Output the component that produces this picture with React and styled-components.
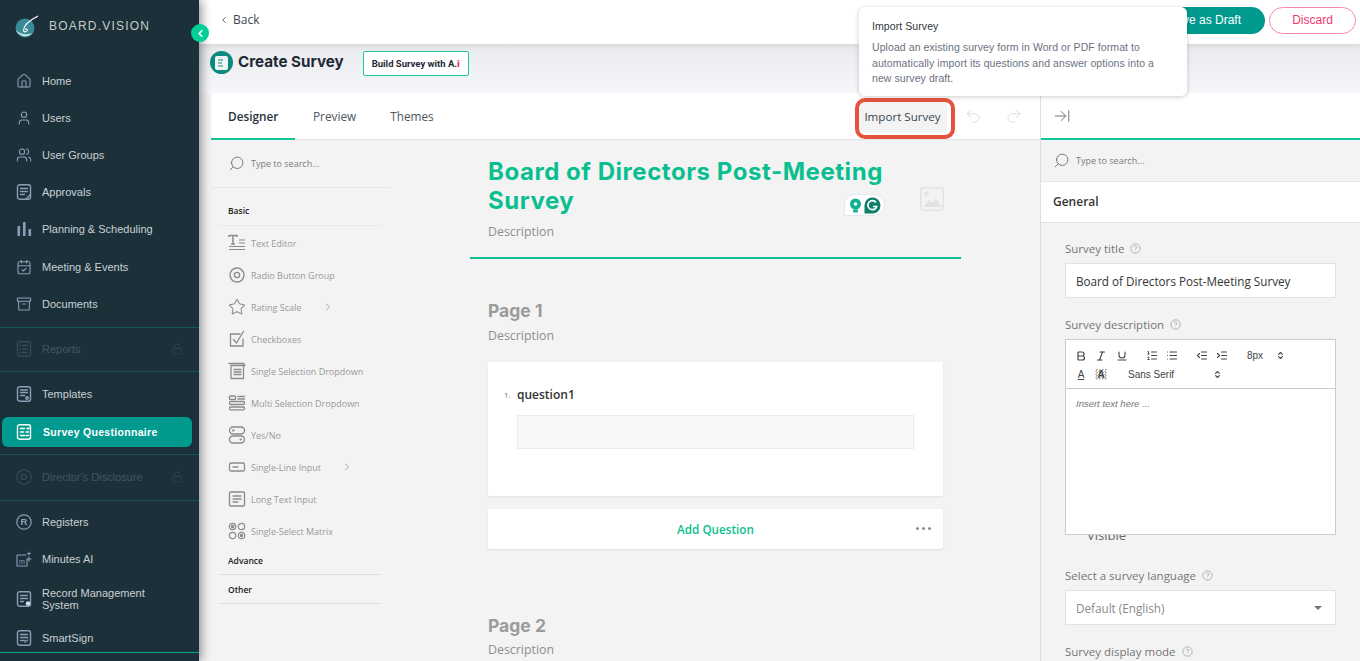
import React from 'react';
import styled, { createGlobalStyle } from 'styled-components';
import {
  House, User, Users, Archive, CalendarCheck, Lock, ChevronLeft, ChevronRight, Search, Star,
  Undo2, Redo2, ArrowRightToLine, Bold, Italic, Underline, ListOrdered, List,
  IndentDecrease, IndentIncrease, ChevronsUpDown,
} from 'lucide-react';

const GlobalStyle = createGlobalStyle`
  html, body { margin: 0; padding: 0; height: 100%; overflow: hidden; }
  * { box-sizing: border-box; }
  body { font-family: "Open Sans", sans-serif; background: #f3f3f3; }
`;

const Page = styled.div`
  position: relative;
  display: flex;
  width: 1360px;
  height: 661px;
  overflow: hidden;
`;

/* sidebar */
const Sidebar = styled.aside`
  flex: 0 0 199px;
  height: 661px;
  background: #1c3039;
  box-shadow: 2px 0 10px rgba(0, 0, 0, 0.45);
  z-index: 3;
  display: flex;
  flex-direction: column;
  font-family: "Liberation Sans", Arial, sans-serif;
`;

const Brand = styled.div`
  height: 62px;
  flex: none;
  padding: 14px 0 0 14px;
  display: flex;
  align-items: flex-start;
  gap: 11px;
  color: #c6ccc9;
  font-size: 12px;
  letter-spacing: 1.2px;
  span { margin-top: 5px; }
`;

const NavRow = styled.div`
  height: ${p => p.$h || 37.2}px;
  flex: none;
  display: flex;
  align-items: center;
  padding: 0 0 ${p => p.$pb || 0}px 16px;
  gap: 10px;
  font-size: 11px;
  line-height: 12px;
  color: #c9d0d6;
  position: relative;
  opacity: ${p => (p.$off ? 0.22 : 1)};
  svg.nav-icon { flex: none; width: 16px; height: 16px; color: #8d9db6; }
`;

const ActiveRow = styled.div`
  height: 30px;
  flex: none;
  margin: 0 7px 0 2px;
  padding-left: 14px;
  display: flex;
  align-items: center;
  gap: 11px;
  background: #009a8f;
  border-radius: 6px;
  color: #fff;
  font-size: 10.5px;
  font-weight: 700;
  letter-spacing: 0.3px;
  svg { flex: none; width: 16px; height: 16px; color: #fff; }
`;

const NavLock = styled(Lock)`
  position: absolute;
  right: 16px;
  width: 12px;
  height: 12px;
  color: #8293ad;
`;

const NavRule = styled.div`
  height: 1px;
  flex: none;
  background: ${p => p.$bright ? '#00a884' : '#17594f'};
`;

const Spacer = styled.div`
  height: ${p => p.$h}px;
  flex: none;
`;

const Collapse = styled.button`
  position: absolute;
  left: 191px;
  top: 24px;
  width: 18px;
  height: 18px;
  padding: 0;
  border: none;
  border-radius: 50%;
  background: #04cf96;
  color: #fff;
  display: flex;
  align-items: center;
  justify-content: center;
  z-index: 5;
`;

/* main */
const Main = styled.div`
  flex: 1;
  min-width: 0;
  display: flex;
  flex-direction: column;
`;

const TopBar = styled.header`
  height: 44px;
  flex: none;
  background: #fff;
  box-shadow: 0 1px 6px rgba(0, 0, 0, 0.1);
  display: flex;
  align-items: center;
  padding: 0 4px 3px 20px;
  z-index: 1;
`;

const BackLink = styled.a`
  display: flex;
  align-items: center;
  gap: 4px;
  margin-bottom: 2px;
  font-size: 12px;
  color: #3c4650;
`;

const Pill = styled.button`
  height: 27px;
  border-radius: 14px;
  font-family: "Liberation Sans", Arial, sans-serif;
  font-size: 12px;
  padding: 0 0 1px;
`;

const SaveButton = styled(Pill)`
  margin-left: auto;
  width: 110px;
  padding: 0 24px 1px 0;
  text-align: right;
  background: #009a8f;
  color: #fff;
  border: none;
`;

const DiscardButton = styled(Pill)`
  margin-left: 4px;
  width: 87px;
  background: #fff;
  color: #f2386f;
  border: 1px solid #f78aa9;
`;

const TitleBar = styled.div`
  height: 49px;
  flex: none;
  background: linear-gradient(#e8eaee, #f6f7fb);
  display: flex;
  align-items: flex-start;
  padding: 7px 0 0 11px;
`;

const TitleBadge = styled.span`
  width: 23px;
  height: 23px;
  flex: none;
  border-radius: 50%;
  background: #0d8a80;
  display: flex;
  align-items: center;
  justify-content: center;
  margin-right: 5px;
`;

const PageTitle = styled.h1`
  margin: 0;
  font-family: "Inter", sans-serif;
  font-size: 15.2px;
  line-height: 21px;
  font-weight: 700;
  color: #1f2a35;
`;

const BuildButton = styled.button`
  margin-left: 19px;
  height: 25px;
  width: 106px;
  padding: 0;
  background: #fff;
  border: 1px solid #19c79b;
  border-radius: 2px;
  font-family: "Roboto", sans-serif;
  font-size: 9.5px;
  font-weight: 700;
  color: #1f2a35;
  b { color: #e8326b; }
`;

const Workspace = styled.div`
  flex: 1;
  min-height: 0;
  display: flex;
`;

const Designer = styled.div`
  flex: 0 0 842px;
  display: flex;
  flex-direction: column;
  border-right: 1px solid #dedede;
`;

const TabBar = styled.nav`
  height: 47px;
  flex: none;
  margin-left: 12px;
  background: #fff;
  border-bottom: 1px solid #e4e4e4;
  display: flex;
  align-items: stretch;
`;

const Tab = styled.a`
  display: flex;
  align-items: center;
  width: ${p => (p.$active ? '84px' : 'auto')};
  padding: 1px 16px 0 ${p => (p.$active ? 17 : 18)}px;
  margin-bottom: -1px;
  font-size: 11.8px;
  white-space: nowrap;
  color: ${p => (p.$active ? '#26323c' : '#4c5761')};
  font-weight: ${p => (p.$active ? 600 : 400)};
  border-bottom: 2px solid ${p => (p.$active ? '#12c797' : 'transparent')};
`;

const TabTools = styled.div`
  margin-left: auto;
  display: flex;
  align-items: center;
  padding-right: 17px;
  gap: 23px;
  color: #dcdcdc;
`;

const ImportButton = styled.button`
  position: relative;
  width: 89px;
  height: 31px;
  margin-right: -6px;
  padding: 0;
  background: #f3f3f3;
  border: none;
  font-family: "Open Sans", sans-serif;
  font-size: 11.6px;
  color: #3c4650;
  &::after {
    content: '';
    position: absolute;
    left: -3px;
    right: -8px;
    top: -3px;
    bottom: -7px;
    border: 4px solid #e5533c;
    border-radius: 10px;
  }
`;

const Columns = styled.div`
  flex: 1;
  min-height: 0;
  display: flex;
`;

const Palette = styled.div`
  flex: 0 0 191px;
  padding-left: 12px;
`;

const SearchRow = styled.div`
  height: ${p => p.$h}px;
  display: flex;
  align-items: center;
  gap: 6px;
  padding-left: ${p => p.$pl}px;
  border-bottom: 1px solid #e6e6e6;
  font-size: 9px;
  color: #7b7b7b;
  svg { transform: scaleX(-1); color: #707070; }
`;

const GroupHead = styled.div`
  margin: ${p => p.$mt}px 9px 0 8px;
  height: ${p => p.$h}px;
  padding: 0 0 ${p => (p.$light ? 9 : 8)}px 9px;
  display: flex;
  align-items: flex-end;
  border-bottom: 1px solid ${p => (p.$light ? '#e9e9e9' : '#dcdcdc')};
  font-size: 8.5px;
  font-weight: 600;
  color: #222;
`;

const PaletteList = styled.div`
  padding: 1px 0 0 17px;
  margin-bottom: 2px;
`;

const PaletteItem = styled.div`
  height: 32px;
  display: flex;
  align-items: center;
  font-size: 9px;
  color: #9a9a9a;
  svg.palette-icon { flex: none; width: 18px; height: 18px; margin-right: 5px; color: #8c8c8c; }
  svg.more { width: 12px; height: 12px; margin-left: ${p => p.$gap}px; color: #a5a5a5; }
`;

const Canvas = styled.div`
  flex: 1;
  min-width: 0;
  padding: 17px 0 0 80px;
  overflow: hidden;
`;

const CanvasHead = styled.div`
  position: relative;
  width: 491px;
  height: 102px;
  padding: 0 18px;
  border-bottom: 2px solid #0abf8f;
`;

const SurveyTitle = styled.h2`
  margin: 0;
  width: 410px;
  font-family: "Inter", sans-serif;
  font-size: 24px;
  letter-spacing: 0.55px;
  line-height: 29px;
  font-weight: 700;
  color: #0abf8f;
`;

const Description = styled.div`
  font-size: 12.4px;
  line-height: 16px;
  color: #8f8f8f;
  margin-top: ${p => p.$mt}px;
`;

const ImageSlot = styled.svg`
  position: absolute;
  left: 450px;
  top: 30px;
`;

const Grammarly = styled.div`
  position: absolute;
  left: 374px;
  top: 37px;
  width: 41px;
  height: 22px;
  border-radius: 11px 11px 11px 2px;
  background: #fff;
  border: 1px solid #e4e8f0;
  display: flex;
  align-items: center;
  justify-content: center;
  gap: 2px;
`;

const PageBlock = styled.section`
  margin-left: 18px;
  width: 455px;
`;

const PageName = styled.h3`
  margin: ${p => p.$mt}px 0 0;
  font-family: "Inter", sans-serif;
  font-size: 17.5px;
  line-height: 22px;
  font-weight: 700;
  color: #9b9b9b;
`;

const QuestionCard = styled.div`
  margin-top: 18px;
  height: 134px;
  background: #fff;
  border-radius: 2px;
  box-shadow: 0 1px 2px rgba(0, 0, 0, 0.08);
  padding: 24px 29px 0 16px;
`;

const QuestionLabel = styled.div`
  display: flex;
  align-items: center;
  height: 16px;
  font-size: 12px;
  font-weight: 600;
  color: #333;
  i { font-style: normal; font-weight: 400; font-size: 8px; color: #777; width: 13px; }
`;

const AnswerBox = styled.div`
  margin: 13px 0 0 13px;
  height: 34px;
  background: #f8f8f8;
  border: 1px solid #ececec;
`;

const AddBar = styled.div`
  position: relative;
  margin-top: 13px;
  height: 40px;
  background: #fff;
  border-radius: 2px;
  box-shadow: 0 1px 2px rgba(0, 0, 0, 0.1);
  display: flex;
  align-items: center;
  justify-content: center;
  font-size: 11.7px;
  font-weight: 600;
  color: #0abf8f;
`;

const MoreDots = styled.span`
  position: absolute;
  right: 12px;
  top: 18px;
  display: flex;
  gap: 3px;
  i { width: 3px; height: 3px; border-radius: 50%; background: #8a8a8a; }
`;

/* right panel */
const SidePanel = styled.div`
  flex: 1;
  min-width: 0;
  display: flex;
  flex-direction: column;
`;

const SideHead = styled.div`
  height: 47px;
  flex: none;
  background: #fff;
  border-bottom: 2px solid #12c797;
  display: flex;
  align-items: center;
  padding: 1px 0 0 12px;
  color: #666;
`;

const GeneralHead = styled.div`
  height: 41px;
  flex: none;
  background: #fff;
  border-bottom: 1px solid #e2e2e2;
  display: flex;
  align-items: center;
  padding: 0 0 2px 12px;
  font-size: 12px;
  font-weight: 600;
  color: #333;
`;

const Form = styled.div`
  padding: 18px 24px 0;
`;

const FieldLabel = styled.label`
  display: flex;
  align-items: center;
  gap: 6px;
  height: 14px;
  margin-top: ${p => p.$mt || 0}px;
  font-size: 11.5px;
  color: #757575;
  svg { color: #aaa; }
`;

const Field = styled.div`
  margin-top: 8px;
  height: 35px;
  background: #fff;
  border: 1px solid #e2e2e2;
  display: flex;
  align-items: center;
  justify-content: space-between;
  padding: 0 10px;
  font-size: 11.7px;
  color: ${p => (p.$muted ? '#8a8a8a' : '#333')};
`;

const Caret = styled.span`
  width: 0;
  height: 0;
  margin-right: 3px;
  border-left: 4px solid transparent;
  border-right: 4px solid transparent;
  border-top: 4px solid #777;
`;

const Editor = styled.div`
  margin-top: 8px;
  height: 196px;
  background: #fff;
  border: 1px solid #ccc;
  font-family: "Liberation Sans", Arial, sans-serif;
`;

const EditorTools = styled.div`
  height: 49px;
  border-bottom: 1px solid #ccc;
  padding: 6px 0 0 9px;
  color: #444;
`;

const ToolLine = styled.div`
  height: 19px;
  display: flex;
  align-items: center;
  font-size: 10px;
  color: #444;
`;

const Tool = styled.span`
  display: inline-flex;
  align-items: center;
  justify-content: center;
  width: 12px;
  margin-right: ${p => p.$mr || 0}px;
`;

const Swatch = styled(Tool)`
  font-weight: 700;
  background: repeating-conic-gradient(#bbb 0 25%, #fff 0 50%) 0 0 / 3px 3px;
`;

const ToolText = styled.span`
  margin-right: ${p => p.$mr}px;
`;

const EditorBody = styled.div`
  padding: 9px 10px;
  font-size: 9.5px;
  font-style: italic;
  color: #777;
`;

const ClippedWord = styled.div`
  height: 7px;
  overflow: hidden;
  padding-left: 22px;
  display: flex;
  align-items: flex-end;
  font-size: 13px;
  line-height: 14px;
  color: #666;
`;

/* tooltip */
const Tooltip = styled.div`
  position: absolute;
  left: 859px;
  top: 7px;
  width: 328px;
  height: 89px;
  padding: 13px 13px 0;
  background: #fff;
  border-radius: 6px;
  box-shadow: 0 1px 5px rgba(0, 0, 0, 0.2);
  font-family: "Liberation Sans", Arial, sans-serif;
  letter-spacing: 0.08px;
  z-index: 6;
`;

const TooltipTitle = styled.div`
  font-size: 10.5px;
  line-height: 13px;
  color: #2f3640;
`;

const TooltipText = styled.p`
  margin: 7px 0 0;
  font-size: 10.5px;
  line-height: 15.5px;
  color: #6b7280;
`;

const s = { fill: 'none', stroke: 'currentColor', strokeWidth: 1.6, strokeLinecap: 'round', strokeLinejoin: 'round' };

const PageIcon = ({ children, className }) => (
  <svg className={className} viewBox="0 0 16 16" {...s} strokeWidth="1.4">
    <rect x="1.5" y="0.8" width="13" height="14.4" rx="2" />
    {children}
  </svg>
);

const ApprovalsIcon = p => <PageIcon {...p}><path d="M4.5 4.5h7M4.5 7.5h7M4.5 10.5h4M10 15l4.5-4.5" /></PageIcon>;
const ReportsIcon = p => <PageIcon {...p}><path d="M6.5 4.5h5M6.5 8h5M6.5 11.5h5M4 4.5h.5M4 8h.5M4 11.5h.5" /></PageIcon>;
const TemplatesIcon = p => <PageIcon {...p}><path d="M4.5 4h7M4.5 6.5h7M4.5 9.5h4" /><circle cx="11" cy="12" r="1.3" /></PageIcon>;
const SurveyIcon = p => <PageIcon {...p}><path d="M4.5 4.5h4M4.5 8h3M4.5 11.5h4M11 4l1 1 1-1M10 8h2.5M10 11.5h2.5" /></PageIcon>;
const RecordIcon = p => <PageIcon {...p}><path d="M4.5 4.5h7M4.5 7.5h7M4.5 10.5h3" /><circle cx="12" cy="12.5" r="2.2" fill="#d8dde5" stroke="none" /></PageIcon>;
const SignIcon = p => <PageIcon {...p}><path d="M4.5 4.5h7M4.5 7.5h7M4.5 10.5h4M9 12l2.5-2" /></PageIcon>;

const BarsIcon = ({ className }) => (
  <svg className={className} viewBox="0 0 16 16" fill="currentColor">
    <rect x="1.5" y="5" width="2.6" height="10" rx="0.6" />
    <rect x="7" y="1" width="2.6" height="14" rx="0.6" />
    <rect x="12.5" y="8" width="2.6" height="7" rx="0.6" />
  </svg>
);

const CircleLetter = ({ letter, className }) => (
  <svg className={className} viewBox="0 0 16 16">
    <circle cx="8" cy="8" r="7.2" fill="none" stroke="currentColor" strokeWidth="1.2" />
    <text x="8" y="11.3" textAnchor="middle" fontSize="9.5" fontWeight="700" fontFamily="Liberation Sans" fill="currentColor">{letter}</text>
  </svg>
);

const MinutesIcon = ({ className }) => (
  <svg className={className} viewBox="0 0 16 16" {...s} strokeWidth="1.1">
    <path d="M10 4H1v11h10V8" />
    <text x="6" y="12.5" textAnchor="middle" fontSize="7" fontFamily="Liberation Sans" fill="currentColor" stroke="none">m</text>
    <path d="M13 1v3M11.5 2.5h3M13 6v4M11 8h4" />
  </svg>
);

const Logo = () => (
  <svg width="24" height="24" viewBox="0 0 24 24">
    <circle cx="11" cy="14" r="9.5" fill="#3a8a99" />
    <path d="M2 16c2 6 12 9 16 3-5 2-11 2-16-3z" fill="#c9e6e0" />
    <path d="M24 2C16 6 10 11 9.5 16c-.2 2 2.5 2.5 3.5.5.7-1.5-1-2-1.8-1" fill="none" stroke="#eef4ef" strokeWidth="1.3" />
  </svg>
);

const TextEditorIcon = ({ className }) => (
  <svg className={className} viewBox="0 0 18 18" {...s} strokeWidth="1.2" strokeLinecap="butt">
    <path d="M1 3V1.5h8V3M5 1.5V10M3 10h4" strokeWidth="1.5" />
    <path d="M11 6h6M11 9h6M1 12.5h16M1 15.5h16" />
  </svg>
);
const RadioIcon = ({ className }) => (
  <svg className={className} viewBox="0 0 18 18" {...s} strokeWidth="1.4">
    <circle cx="9" cy="9" r="7" />
    <circle cx="9" cy="9" r="2.6" />
  </svg>
);
const CheckIcon = ({ className }) => (
  <svg className={className} viewBox="0 0 18 18" {...s} strokeWidth="1.3">
    <path d="M15 9v7H2.5V4H12" />
    <path d="M5.5 9.5L8.5 13 15.5 1.5" />
  </svg>
);
const SingleDropIcon = ({ className }) => (
  <svg className={className} viewBox="0 0 18 18" {...s} strokeWidth="1.3">
    <path d="M1 1.5h14.5l1.5 2H3v13h12.5V4" />
    <path d="M6 7.5h7M6 10h7M6 12.5h7" />
  </svg>
);
const MultiDropIcon = ({ className }) => (
  <svg className={className} viewBox="0 0 18 18" {...s} strokeWidth="1.3">
    <rect x="1.5" y="2" width="6" height="3.5" rx="1" />
    <rect x="1.5" y="7.5" width="15" height="3" rx="1" />
    <rect x="1.5" y="13" width="15" height="2.8" rx="1" />
    <path d="M10 2.5h6.5M10 5h6.5" />
  </svg>
);
const YesNoIcon = ({ className }) => (
  <svg className={className} viewBox="0 0 18 18" {...s} strokeWidth="1.4">
    <rect x="1.5" y="1" width="15" height="7" rx="3.5" />
    <rect x="1.5" y="10" width="15" height="7" rx="3.5" />
    <path d="M5 4.5h.5M12.5 13.5h.5" strokeWidth="2" />
  </svg>
);
const LineInputIcon = ({ className }) => (
  <svg className={className} viewBox="0 0 18 18" {...s} strokeWidth="1.3">
    <rect x="1.5" y="5" width="15" height="8" rx="1.5" />
    <path d="M5 9h5" />
  </svg>
);
const LongTextIcon = ({ className }) => (
  <svg className={className} viewBox="0 0 18 18" {...s} strokeWidth="1.3">
    <rect x="1.5" y="2" width="15" height="14" rx="1" />
    <path d="M5 6h8M5 9h8M5 12h5" />
  </svg>
);
const MatrixIcon = ({ className }) => (
  <svg className={className} viewBox="0 0 18 18" {...s} strokeWidth="1.2">
    <circle cx="4.5" cy="4.5" r="3.2" />
    <circle cx="4.5" cy="4.5" r="1.2" fill="currentColor" />
    <circle cx="13.5" cy="4.5" r="3.2" />
    <circle cx="4.5" cy="13.5" r="3.2" />
    <circle cx="13.5" cy="13.5" r="3.2" />
    <circle cx="13.5" cy="13.5" r="1.2" fill="currentColor" />
  </svg>
);
const StarIcon = ({ className }) => <Star className={className} strokeWidth={1.4} />;

const HelpIcon = () => (
  <svg width="11" height="11" viewBox="0 0 16 16" fill="none" stroke="currentColor" strokeWidth="1.3">
    <circle cx="8" cy="8" r="6.8" />
    <path d="M6 6.3c0-2.6 4-2.6 4 0 0 1.6-2 1.6-2 3.2M8 11.5v.6" />
  </svg>
);

const MagnifierIcon = ({ size }) => <Search size={size} strokeWidth={1.3} />;

const basicItems = [
  { label: 'Text Editor', Icon: TextEditorIcon },
  { label: 'Radio Button Group', Icon: RadioIcon },
  { label: 'Rating Scale', Icon: StarIcon, gap: 21 },
  { label: 'Checkboxes', Icon: CheckIcon },
  { label: 'Single Selection Dropdown', Icon: SingleDropIcon },
  { label: 'Multi Selection Dropdown', Icon: MultiDropIcon },
  { label: 'Yes/No', Icon: YesNoIcon },
  { label: 'Single-Line Input', Icon: LineInputIcon, gap: 20 },
  { label: 'Long Text Input', Icon: LongTextIcon },
  { label: 'Single-Select Matrix', Icon: MatrixIcon },
];

const topNav = [
  { label: 'Home', Icon: House },
  { label: 'Users', Icon: User },
  { label: 'User Groups', Icon: Users },
  { label: 'Approvals', Icon: ApprovalsIcon },
  { label: 'Planning & Scheduling', Icon: BarsIcon },
  { label: 'Meeting & Events', Icon: CalendarCheck },
  { label: 'Documents', Icon: Archive },
];

const Nav = ({ label, Icon, letter, off, h, pb }) => (
  <NavRow $off={off} $h={h} $pb={pb}>
    <Icon className="nav-icon" letter={letter} strokeWidth={1.6} />
    <span>{label}</span>
    {off && <NavLock strokeWidth={1.5} />}
  </NavRow>
);

export default function App() {
  return (
    <Page>
      <GlobalStyle />
      <Sidebar>
        <Brand>
          <Logo />
          <span>BOARD.VISION</span>
        </Brand>
        {topNav.map(item => <Nav key={item.label} {...item} />)}
        <Spacer $h={5} />
        <NavRule />
        <Nav label="Reports" Icon={ReportsIcon} off h={43} pb={2} />
        <NavRule />
        <Nav label="Templates" Icon={TemplatesIcon} h={45} pb={2} />
        <ActiveRow><SurveyIcon /><span>Survey Questionnaire</span></ActiveRow>
        <Spacer $h={7} />
        <NavRule />
        <Nav label="Director's Disclosure" Icon={CircleLetter} letter="D" off h={45} pb={2} />
        <NavRule />
        <Nav label="Registers" Icon={CircleLetter} letter="R" h={42} />
        <Nav label="Minutes AI" Icon={MinutesIcon} h={32} />
        <Nav label={<>Record Management<br />System</>} Icon={RecordIcon} h={48} />
        <Nav label="SmartSign" Icon={SignIcon} h={29} />
        <NavRule $bright />
      </Sidebar>
      <Collapse aria-label="Collapse"><ChevronLeft size={11} strokeWidth={3.5} /></Collapse>

      <Main>
        <TopBar>
          <BackLink><ChevronLeft size={10} strokeWidth={2} />Back</BackLink>
          <SaveButton>Save as Draft</SaveButton>
          <DiscardButton>Discard</DiscardButton>
        </TopBar>
        <TitleBar>
          <TitleBadge>
            <svg width="13" height="14" viewBox="0 0 13 14">
              <rect width="13" height="14" rx="2" fill="#f1f4f4" />
              <path d="M3 4h5M3 7h4M3 10h5" stroke="#0d8a80" strokeWidth="1.2" />
            </svg>
          </TitleBadge>
          <PageTitle>Create Survey</PageTitle>
          <BuildButton>Build Survey with A.<b>i</b></BuildButton>
        </TitleBar>
        <Workspace>
          <Designer>
            <TabBar>
              <Tab $active>Designer</Tab>
              <Tab>Preview</Tab>
              <Tab>Themes</Tab>
              <TabTools>
                <ImportButton>Import Survey</ImportButton>
                <Undo2 size={18} strokeWidth={1.3} />
                <Redo2 size={18} strokeWidth={1.3} />
              </TabTools>
            </TabBar>
            <Columns>
              <Palette>
                <SearchRow $h={48} $pl={17}><MagnifierIcon size={17} />Type to search...</SearchRow>
                <GroupHead $mt={13} $h={25} $light>Basic</GroupHead>
                <PaletteList>
                  {basicItems.map(({ label, Icon, gap }) => (
                    <PaletteItem key={label} $gap={gap}>
                      <Icon className="palette-icon" />
                      {label}
                      {gap && <ChevronRight className="more" />}
                    </PaletteItem>
                  ))}
                </PaletteList>
                <GroupHead $mt={0} $h={26}>Advance</GroupHead>
                <GroupHead $mt={0} $h={29}>Other</GroupHead>
              </Palette>
              <Canvas>
                <CanvasHead>
                  <SurveyTitle>Board of Directors Post-Meeting Survey</SurveyTitle>
                  <Description $mt={9}>Description</Description>
                  <Grammarly>
                    <svg width="13" height="15" viewBox="0 0 13 15">
                      <circle cx="6.5" cy="6" r="5.5" fill="#11b18f" />
                      <circle cx="6.5" cy="6" r="1.8" fill="#fff" />
                      <rect x="4" y="11.5" width="5" height="3" rx="1" fill="#11b18f" />
                    </svg>
                    <svg width="17" height="17" viewBox="0 0 17 17">
                      <path d="M8.5 0.5a8 8 0 1 1 0 16H0.5v-8a8 8 0 0 1 8-8z" fill="#0d7e6a" />
                      <path d="M12 5.5a4.5 4.5 0 1 0 .7 4H9" fill="none" stroke="#fff" strokeWidth="1.7" />
                    </svg>
                  </Grammarly>
                  <ImageSlot width="24" height="24" viewBox="0 0 24 24">
                    <rect x="0.7" y="0.7" width="22.6" height="22.6" rx="2" fill="none" stroke="#e2e2e2" strokeWidth="1.4" />
                    <circle cx="6.5" cy="6.5" r="2.2" fill="#e2e2e2" />
                    <path d="M3 20l6-7 3 3 4-5 6 9z" fill="#e2e2e2" />
                  </ImageSlot>
                </CanvasHead>
                <PageBlock>
                  <PageName $mt={41}>Page 1</PageName>
                  <Description $mt={6}>Description</Description>
                  <QuestionCard>
                    <QuestionLabel><i>1.</i>question1</QuestionLabel>
                    <AnswerBox />
                  </QuestionCard>
                  <AddBar>
                    Add Question
                    <MoreDots><i /><i /><i /></MoreDots>
                  </AddBar>
                  <PageName $mt={66}>Page 2</PageName>
                  <Description $mt={5}>Description</Description>
                </PageBlock>
              </Canvas>
            </Columns>
          </Designer>
          <SidePanel>
            <SideHead><ArrowRightToLine size={18} strokeWidth={1.2} /></SideHead>
            <SearchRow $h={42} $pl={12}><MagnifierIcon size={17} />Type to search...</SearchRow>
            <GeneralHead>General</GeneralHead>
            <Form>
              <FieldLabel>Survey title <HelpIcon /></FieldLabel>
              <Field>Board of Directors Post-Meeting Survey</Field>
              <FieldLabel $mt={19}>Survey description <HelpIcon /></FieldLabel>
              <Editor>
                <EditorTools>
                  <ToolLine>
                    <Tool $mr={8}><Bold size={12} strokeWidth={2.4} /></Tool>
                    <Tool $mr={9}><Italic size={12} strokeWidth={2.2} /></Tool>
                    <Tool $mr={18}><Underline size={12} strokeWidth={2.2} /></Tool>
                    <Tool $mr={8}><ListOrdered size={13} /></Tool>
                    <Tool $mr={18}><List size={13} /></Tool>
                    <Tool $mr={8}><IndentDecrease size={13} strokeWidth={2.2} /></Tool>
                    <Tool $mr={19}><IndentIncrease size={13} strokeWidth={2.2} /></Tool>
                    <ToolText $mr={11}>8px</ToolText>
                    <Tool><ChevronsUpDown size={9} strokeWidth={3} /></Tool>
                  </ToolLine>
                  <ToolLine>
                    <Tool $mr={8}><u>A</u></Tool>
                    <Swatch $mr={21}>A</Swatch>
                    <ToolText $mr={37}>Sans Serif</ToolText>
                    <Tool><ChevronsUpDown size={9} strokeWidth={3} /></Tool>
                  </ToolLine>
                </EditorTools>
                <EditorBody>Insert text here ...</EditorBody>
              </Editor>
              <ClippedWord>Visible</ClippedWord>
              <FieldLabel $mt={26}>Select a survey language <HelpIcon /></FieldLabel>
              <Field $muted>Default (English)<Caret /></Field>
              <FieldLabel $mt={19}>Survey display mode <HelpIcon /></FieldLabel>
            </Form>
          </SidePanel>
        </Workspace>
      </Main>

      <Tooltip>
        <TooltipTitle>Import Survey</TooltipTitle>
        <TooltipText>
          Upload an existing survey form in Word or PDF format to<br />
          automatically import its questions and answer options into a<br />
          new survey draft.
        </TooltipText>
      </Tooltip>
    </Page>
  );
}
